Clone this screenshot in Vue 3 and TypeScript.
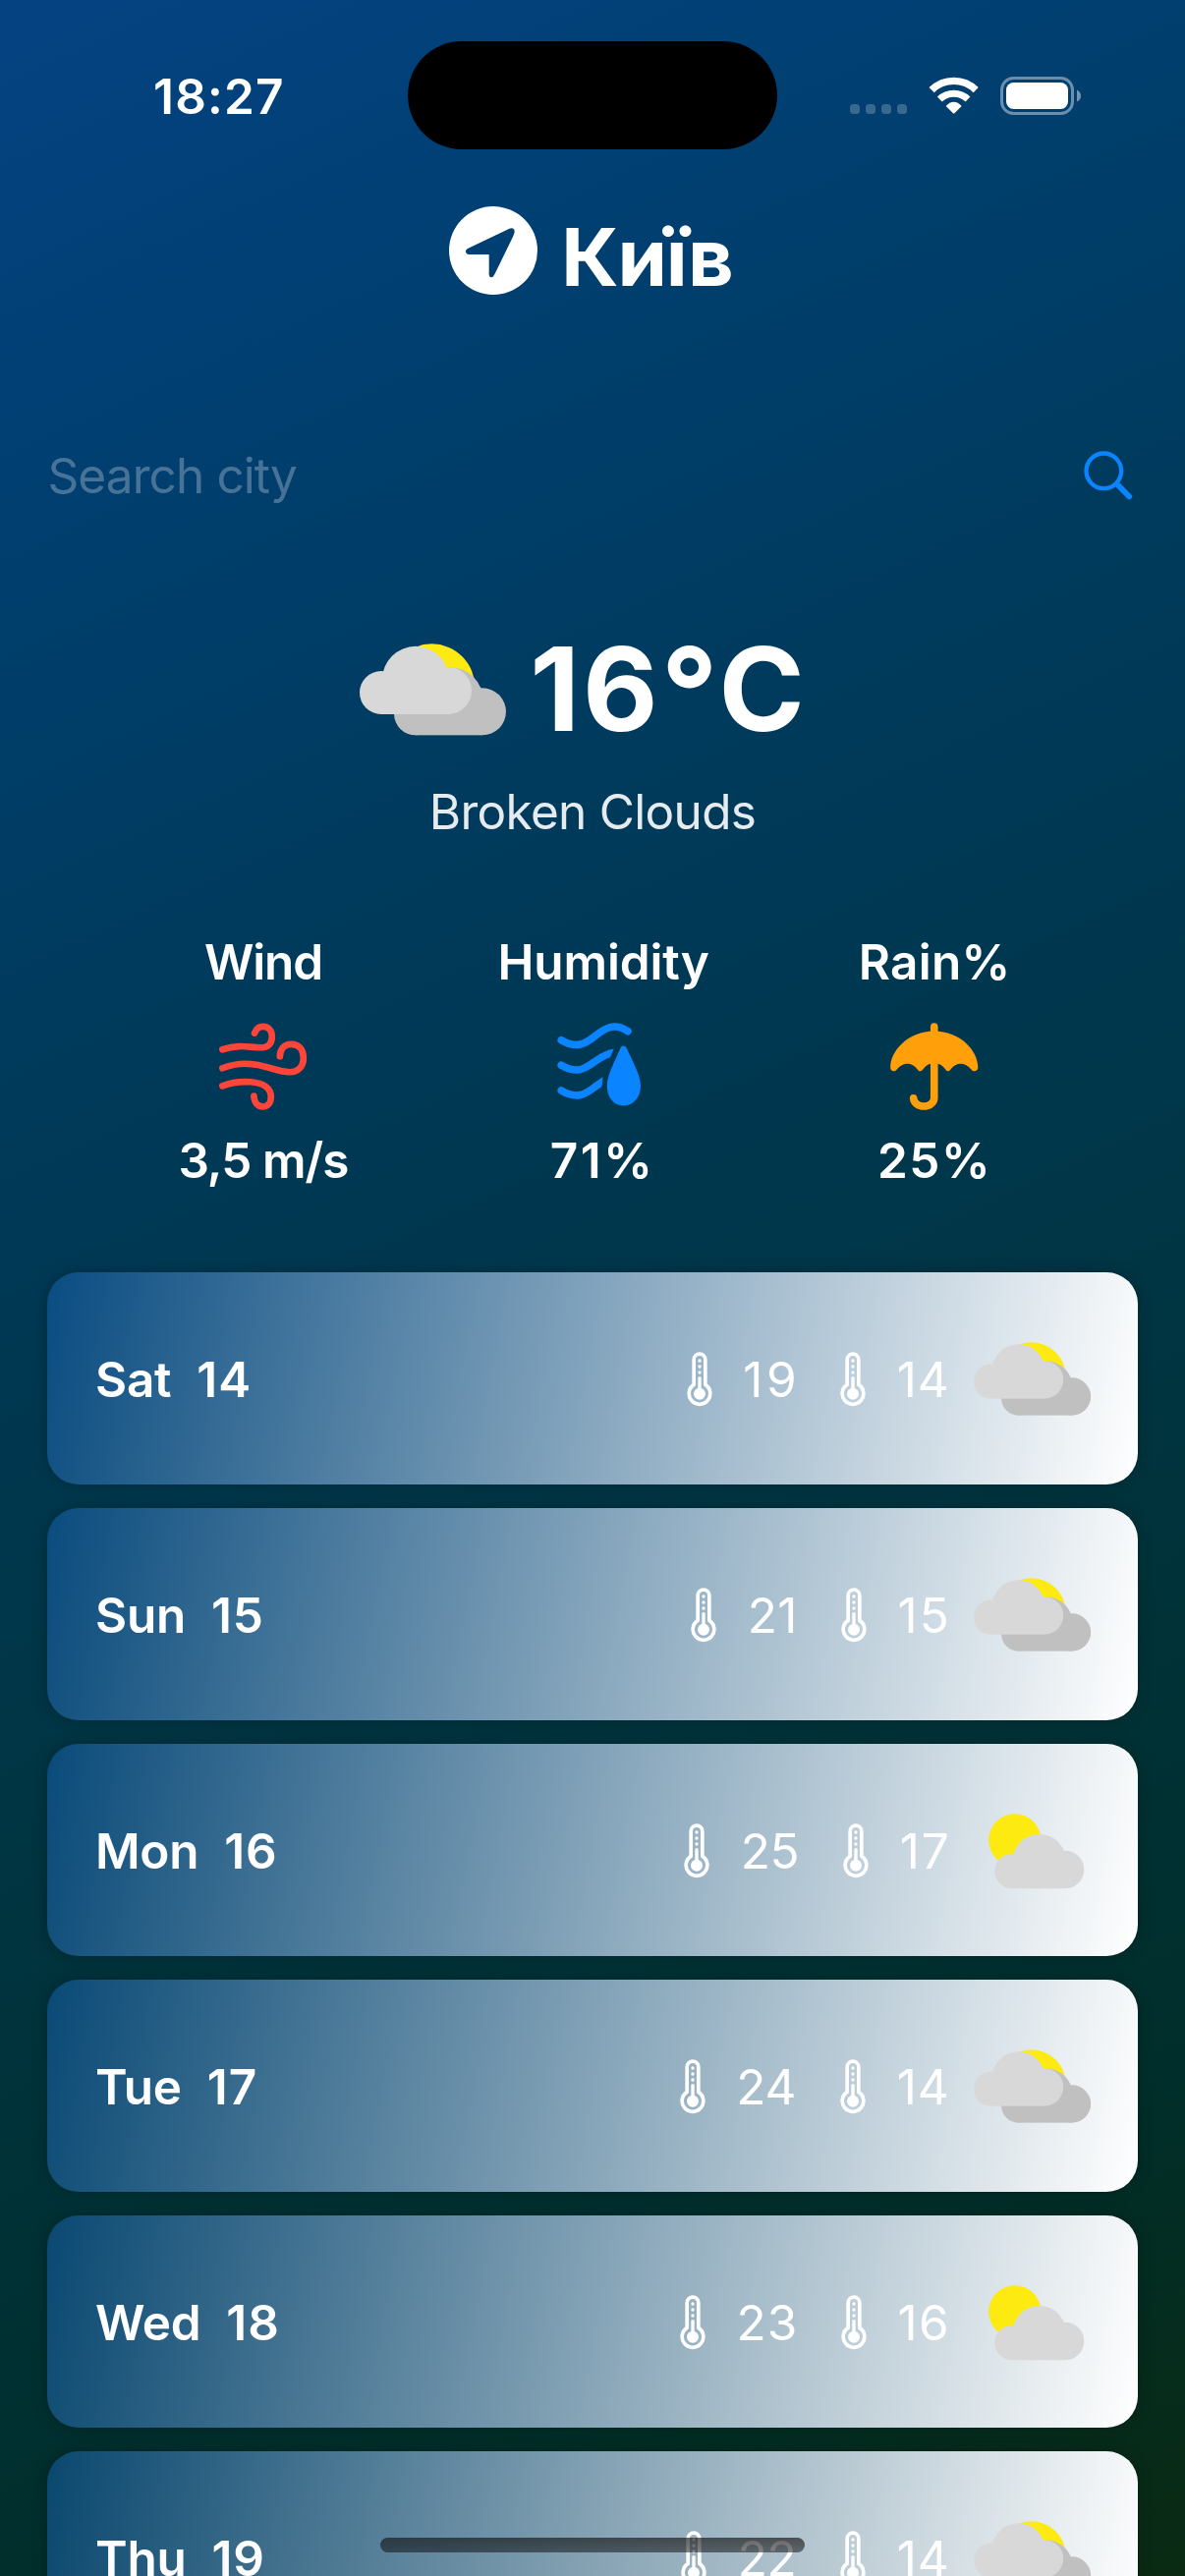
<script setup lang="ts">
type Sky = 'broken' | 'few'
interface Day {
  name: string
  date: string
  high: number
  low: number
  sky: Sky
}

const days: Day[] = [
  { name: 'Sat', date: '14', high: 19, low: 14, sky: 'broken' },
  { name: 'Sun', date: '15', high: 21, low: 15, sky: 'broken' },
  { name: 'Mon', date: '16', high: 25, low: 17, sky: 'few' },
  { name: 'Tue', date: '17', high: 24, low: 14, sky: 'broken' },
  { name: 'Wed', date: '18', high: 23, low: 16, sky: 'few' },
  { name: 'Thu', date: '19', high: 22, low: 14, sky: 'broken' },
]

const pairs: Record<number, number> = { 14: 1, 15: 2, 16: 1.5, 17: 2, 19: 3.5, 21: 0.5, 22: -0.5, 23: 1, 25: -0.5 }
const track = (n: number) => {
  const v = pairs[n] ?? 0
  return { letterSpacing: `${v}px`, marginRight: `${-v}px` }
}
</script>

<template>
  <div class="screen">
    <svg class="defs" aria-hidden="true">
      <defs>
        <g id="cloud">
          <circle cx="66" cy="150" r="66" />
          <circle cx="171" cy="110.500" r="102" />
          <circle cx="270" cy="144" r="72" />
          <rect x="66" y="120" width="204" height="96" />
        </g>
        <g id="sky-broken">
          <circle cx="220" cy="133" r="132" fill="#fcea10" />
          <use href="#cloud" x="105" y="64" fill="#c0c0c0" />
          <use href="#cloud" x="0" y="0" fill="#d8d8d8" />
        </g>
        <g id="sky-few">
          <circle cx="157" cy="101" r="100" fill="#fcea10" />
          <use href="#cloud" x="79.500" y="70" fill="#d8d8d8" />
        </g>
        <g id="thermo">
          <path d="M18 100V24A17.500 17.500 0 0 1 53 24V100A32.500 32.500 0 1 1 18 100Z" transform="translate(3.500 0)" fill="none" stroke="#fff" stroke-width="11" stroke-linejoin="round" />
          <circle cx="39" cy="128" r="18" fill="#fff" />
          <path d="M39 80V120" stroke="#fff" stroke-width="10" stroke-linecap="round" />
          <circle cx="39" cy="27" r="5" fill="#fff" />
          <circle cx="39" cy="45" r="5" fill="#fff" />
          <circle cx="39" cy="63" r="5" fill="#fff" />
        </g>
      </defs>
    </svg>

    <header class="status">
      <span class="time">18:27</span>
      <span class="island"></span>
      <div class="signals">
        <svg class="dots" viewBox="0 0 58 10"><rect v-for="i in 4" :key="i" :x="(i - 1) * 16" y="0" width="10" height="10" rx="3.500" fill="#fff" fill-opacity=".22" /></svg>
        <svg class="wifi" viewBox="285 56 153 113">
          <g fill="none" stroke="#fff">
            <path d="M294.500 97A96 96 0 0 1 429.500 97" stroke-width="22" />
            <path d="M319 125A62 62 0 0 1 405 125" stroke-width="21" />
          </g>
          <path d="M338 146Q349 133 362 133Q375 133 386 146L365 167Q362 170 359 167Z" fill="#fff" />
        </svg>
        <svg class="battery" viewBox="0 0 83 39">
          <rect x="1.500" y="1.500" width="72" height="36" rx="12" fill="none" stroke="#fff" stroke-opacity=".42" stroke-width="3" />
          <rect x="6" y="6" width="63" height="27" rx="7.500" fill="#fff" />
          <path d="M78 13.500Q82 15.500 82 19.500T78 25.500Z" fill="#fff" fill-opacity=".45" />
        </svg>
      </div>
    </header>

    <div class="city">
      <svg class="pin" viewBox="51 60 270 270">
        <path fill="#fff" fill-rule="evenodd" d="M186 60A135 135 0 1 1 186 330A135 135 0 1 1 186 60ZM108 189L235 128Q251 123 251 138Q250 145 246 153L190 268Q186 277 180 277Q173 276 173 267V207H112Q102 206 102 197Q102 192 108 189Z" />
      </svg>
      <h1>Київ</h1>
    </div>

    <div class="search">
      <span>Search city</span>
      <svg viewBox="188 86 149 149" fill="none" stroke="#0a84ff" stroke-linecap="round">
        <circle cx="249" cy="147" r="53.500" stroke-width="13" />
        <path d="M290 188L327 225.500" stroke-width="17.500" />
      </svg>
    </div>

    <section class="now">
      <svg class="now-sky" viewBox="0 0 448 282"><use href="#sky-broken" /></svg>
      <div class="temp">16<span class="deg">°</span>C</div>
    </section>
    <p class="summary">Broken Clouds</p>

    <section class="stats">
      <div class="stat">
        <span class="label wind">Wind</span>
        <svg viewBox="189 335 268 267" fill="none" stroke="#ff453a" stroke-width="20" stroke-linecap="round">
          <path d="M199 416C255 398 280 411 322 410C340 409 350 396 350 377C350 358 339 346 323 346C308 346 301 355 297 366" />
          <path d="M199 473C240 457 290 456 335 470C370 480 384 485 404 485C430 485 446 467 446 442C446 417 432 400 409 400C387 400 375 415 374 437" />
          <path d="M199 527C230 515 256 513 285 515C325 518 347 534 347 561C347 578 337 590 322 590C306 590 296 577 295 558" />
        </svg>
        <span class="value speed">3,5 m/s</span>
      </div>
      <div class="stat">
        <span class="label hum">Humidity</span>
        <svg class="humid" viewBox="80 332 266 267" fill="none" stroke="#0a84ff" stroke-width="22.500" stroke-linecap="round">
          <clipPath id="wave-cut"><path d="M80 400H262L248 434L225 490L221 530V600H80Z" /></clipPath>
          <path d="M98 385C145 413 172 395 200 373C235 345 262 332 300 358" />
          <g clip-path="url(#wave-cut)">
            <path d="M98 461C145 489 172 471 200 450C222 434 240 423 262 422" />
            <path d="M98 538C145 566 172 549 200 527L240 499" />
          </g>
          <path d="M287 402Q293 402 296 408C310 440 339 490 339 523C339 560 316 584 287 584C258 584 237 560 237 523C237 490 265 440 278 408Q281 402 287 402Z" fill="#0a84ff" stroke="none" />
        </svg>
        <span class="value v71">71%</span>
      </div>
      <div class="stat">
        <span class="label rain">Rain%</span>
        <svg viewBox="1094.500 333 270 270">
          <path d="M1229.500 345V565A31.800 26 0 0 1 1166 565" fill="none" stroke="#ff9f0a" stroke-width="23" stroke-linecap="round" />
          <path fill="#ff9f0a" d="M1229 359C1310 359 1364 420 1364 470C1364 482 1350 486 1343 476C1325 453 1296 453 1280 476C1276 483 1268 483 1264 476C1258 468 1250 461 1241 459H1218C1209 461 1201 468 1195 476C1190 483 1182 483 1178 476C1162 453 1133 453 1115 476C1108 486 1095 482 1095 470C1095 420 1150 359 1229 359Z" />
        </svg>
        <span class="value v25">25%</span>
      </div>
    </section>

    <main class="days">
      <article v-for="d in days" :key="d.date" class="day">
        <span class="name">{{ d.name }}</span>
        <span class="date">{{ d.date }}</span>
        <svg class="thermo first" viewBox="0 0 78 168"><use href="#thermo" /></svg>
        <span class="deg-num" :style="track(d.high)">{{ d.high }}</span>
        <svg class="thermo second" viewBox="0 0 78 168"><use href="#thermo" /></svg>
        <span class="deg-num" :style="track(d.low)">{{ d.low }}</span>
        <svg class="day-sky" viewBox="0 0 448 288"><use :href="`#sky-${d.sky}`" /></svg>
      </article>
    </main>

    <div class="home"></div>
  </div>
</template>

<style>
body { background: #002e2a; overflow: hidden; }
</style>

<style scoped>
.screen {
  position: relative;
  display: flex;
  flex-direction: column;
  width: 1206px;
  height: 2622px;
  overflow: hidden;
  color: #fff;
  font-family: Inter, "Noto Sans", sans-serif;
  font-size: 49.5px;
  line-height: 60px;
  white-space: nowrap;
  background: linear-gradient(155.3deg, #044282 0%, #004074 13%, #003a5a 36%, #00343f 62%, #002e2a 84%, #0a2a12 100%);
}
.screen > * { flex-shrink: 0; }
.defs { position: absolute; width: 0; height: 0; }
svg { display: block; flex-shrink: 0; }

.status {
  display: grid;
  grid-template-columns: 415px 376px 1fr;
  align-items: center;
  height: 110px;
  margin-top: 42px;
}
.time { padding: 2px 0 0 156px; font-weight: 600; letter-spacing: 1.2px; }
.island { height: 110px; border-radius: 55px; background: #000; }
.signals { display: flex; align-items: center; padding-left: 74px; }
.dots { width: 58px; height: 10px; margin-top: 28px; }
.wifi { width: 51px; height: 37.7px; margin-left: 22px; }
.battery { width: 83px; height: 39px; margin-left: 22px; margin-top: 1px; }

.city { display: flex; justify-content: center; gap: 24px; height: 90px; margin-top: 58px; }
.pin { width: 90px; height: 90px; }
h1 { margin: 6.5px 3px 0 0; font-size: 81px; line-height: 90px; font-weight: 700; letter-spacing: -1px; }

.search { display: flex; align-items: center; justify-content: space-between; height: 80px; margin-top: 144px; padding: 0 53px 0 48.5px; }
.search span { color: rgba(235, 235, 245, .3); letter-spacing: -.9px; }
.search svg { width: 49.7px; height: 49.7px; }

.now { display: flex; justify-content: center; gap: 23.700px; height: 94px; margin-top: 130px; }
.now-sky { width: 149.300px; height: 94px; margin-top: .5px; }
.temp { margin-right: 18px; font-size: 118px; line-height: 94px; font-weight: 700; letter-spacing: 3px; }
.deg { font-size: 126px; line-height: 0; vertical-align: -5px; letter-spacing: 1px; }
.summary { margin: 48px 0 0; text-align: center; letter-spacing: -.7px; color: rgba(255, 255, 255, .9); }

.stats { display: flex; justify-content: center; gap: 152px; margin-top: 93px; padding-left: 4px; font-weight: 600; }
.stat { display: flex; flex-direction: column; align-items: center; }
.stat svg { width: 89.500px; height: 89.500px; margin: 32px 0 20px; }
.stat .humid { margin-right: 9px; }
.wind { letter-spacing: -1.200px; }
.hum { letter-spacing: -.15px; }
.rain { letter-spacing: .3px; }
.speed { letter-spacing: -.95px; }
.v71 { letter-spacing: 2.500px; margin-right: 2px; }
.v25 { letter-spacing: 1.500px; }

.days { display: flex; flex-direction: column; gap: 24px; margin-top: 84px; padding: 0 48px; }
.day {
  display: flex;
  align-items: center;
  box-sizing: border-box;
  height: 216px;
  padding: 2px 48px 0 49px;
  border-radius: 32px;
  background: linear-gradient(101deg, rgba(20, 96, 176, .5), #fff);
  box-shadow: 0 0 15px rgba(0, 0, 0, .25);
}
.name, .date { font-weight: 600; }
.name { letter-spacing: -.3px; }
.date { margin-left: 26px; letter-spacing: 1px; }
.thermo { width: 26px; height: 56px; margin-right: 31.500px; }
.first { margin-left: auto; }
.second { margin-left: 44.600px; }
.day-sky { width: 119.400px; height: 76.800px; margin: 1.500px 0 0 24.800px; }

.home {
  position: absolute;
  left: 387px;
  bottom: 24px;
  width: 432px;
  height: 15px;
  border-radius: 8px;
  background: linear-gradient(rgba(20, 20, 20, .66), rgba(10, 10, 10, .5));
}
</style>
